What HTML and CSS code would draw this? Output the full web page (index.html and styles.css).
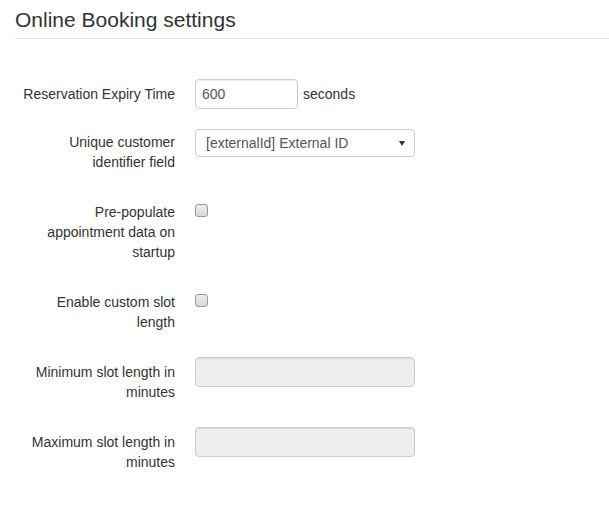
FILE: index.html
```html
<!DOCTYPE html>
<html lang="en">

<head>
    <meta charset="UTF-8">
    <meta name="viewport" content="width=device-width, initial-scale=1.0">
    <title>Online Booking settings</title>
    <link rel="stylesheet" href="styles.css">
</head>

<body>
    <div class="page">
        <h1 class="page-header">Online Booking settings</h1>

        <form class="settings-form">
            <div class="form-group">
                <label class="control-label" for="expiry">Reservation Expiry Time</label>
                <div class="control control-inline">
                    <input type="text" id="expiry" class="form-control input-short" value="600">
                    <span class="unit">seconds</span>
                </div>
            </div>

            <div class="form-group">
                <label class="control-label label-select" for="identifier">Unique customer identifier field</label>
                <div class="control">
                    <div class="select-wrap">
                        <select id="identifier" class="form-select">
                            <option>[externalId] External ID</option>
                        </select>
                    </div>
                </div>
            </div>

            <div class="form-group">
                <label class="control-label" for="prepopulate">Pre-populate appointment data on startup</label>
                <div class="control">
                    <input type="checkbox" id="prepopulate" class="checkbox">
                </div>
            </div>

            <div class="form-group">
                <label class="control-label" for="customSlot">Enable custom slot length</label>
                <div class="control">
                    <input type="checkbox" id="customSlot" class="checkbox">
                </div>
            </div>

            <div class="form-group">
                <label class="control-label" for="minSlot">Minimum slot length in minutes</label>
                <div class="control">
                    <input type="text" id="minSlot" class="form-control input-wide" disabled>
                </div>
            </div>

            <div class="form-group">
                <label class="control-label" for="maxSlot">Maximum slot length in minutes</label>
                <div class="control">
                    <input type="text" id="maxSlot" class="form-control input-wide" disabled>
                </div>
            </div>
        </form>
    </div>
</body>

</html>
```

FILE: styles.css
```css
* {
    margin: 0;
    padding: 0;
    box-sizing: border-box;
}

body {
    font-family: 'Liberation Sans', Arial, sans-serif;
    font-size: 14px;
    line-height: 20px;
    color: #333;
    background: white;
}

.page {
    padding-left: 15px;
}

.page-header {
    margin-top: 8px;
    padding-bottom: 7px;
    font-size: 21px;
    font-weight: normal;
    line-height: 23px;
    color: #333;
    border-bottom: 1px solid #e5e5e5;
}

.settings-form {
    margin-top: 40px;
}

.form-group {
    display: flex;
    align-items: flex-start;
    margin-bottom: 20px;
}

.control-label {
    flex-shrink: 0;
    width: 160px;
    padding: 5px 0 5px 4px;
    text-align: right;
    font-weight: normal;
}

.control-label.label-select {
    padding-top: 3px;
}

.control {
    margin-left: 20px;
}

.control-inline {
    display: flex;
    align-items: center;
}

.form-control {
    display: block;
    height: 30px;
    padding: 0 6px;
    font-family: inherit;
    font-size: 14px;
    color: #555;
    background: white;
    border: 1px solid #ccc;
    border-radius: 4px;
    box-shadow: inset 0 1px 1px rgba(0, 0, 0, 0.075);
}

.form-control:focus {
    outline: none;
    border-color: #66afe9;
}

.form-control:disabled {
    background: #eee;
    cursor: not-allowed;
}

.input-short {
    width: 103px;
}

.input-wide {
    width: 220px;
}

.unit {
    margin-left: 5px;
}

.select-wrap {
    position: relative;
    width: 220px;
}

.select-wrap::after {
    content: '';
    position: absolute;
    top: 12px;
    right: 10px;
    border-left: 3.5px solid transparent;
    border-right: 3.5px solid transparent;
    border-top: 5px solid #333;
    pointer-events: none;
}

.form-select {
    display: block;
    width: 100%;
    height: 28px;
    padding: 0 24px 0 10px;
    font-family: inherit;
    font-size: 14px;
    color: #555;
    background: white;
    border: 1px solid #ccc;
    border-radius: 4px;
    appearance: none;
    -webkit-appearance: none;
}

.checkbox {
    display: block;
    width: 13px;
    height: 13px;
    margin-top: 7px;
    border: 1px solid #9a9a9a;
    border-radius: 3px;
    background: linear-gradient(#ededed, #d8d8d8);
    appearance: none;
    -webkit-appearance: none;
}

.checkbox:checked {
    background: linear-gradient(#dfeefb, #c3dcf3);
}
```
